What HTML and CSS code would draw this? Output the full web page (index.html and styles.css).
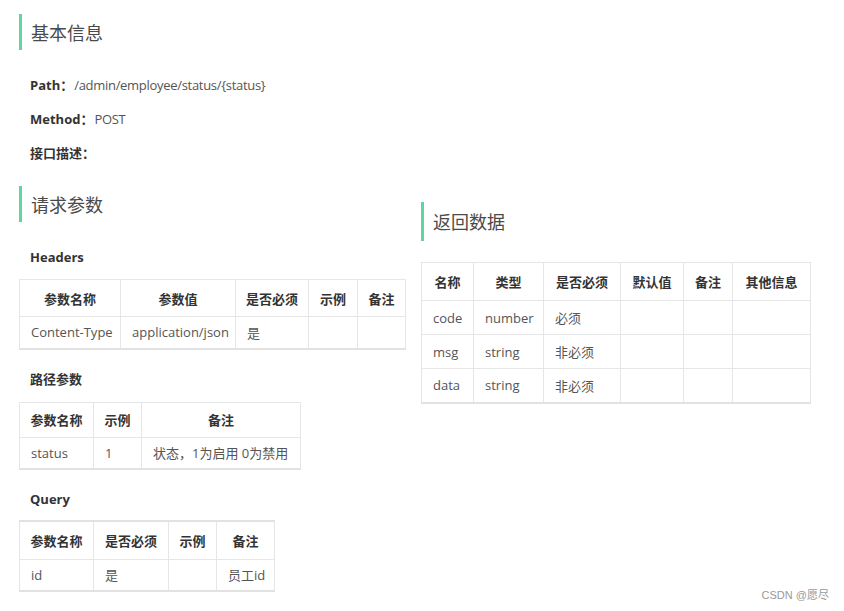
FILE: index.html
```html
<!DOCTYPE html>
<html lang="zh">
<head>
<meta charset="utf-8">
<title>接口文档</title>
<link rel="stylesheet" href="styles.css">
</head>
<body>
<div class="page">
  <section class="basic">
    <h2 class="title">基本信息</h2>
    <div class="meta"><b>Path：</b><span>/admin/employee/status/{status}</span></div>
    <div class="meta"><b>Method：</b><span>POST</span></div>
    <div class="meta"><b>接口描述：</b></div>
  </section>
  <div class="cols">
    <section class="left">
      <h2 class="title">请求参数</h2>
      <h3 class="sub">Headers</h3>
      <table class="t t1">
        <thead><tr><th>参数名称</th><th>参数值</th><th>是否必须</th><th>示例</th><th>备注</th></tr></thead>
        <tbody><tr><td>Content-Type</td><td>application/json</td><td>是</td><td></td><td></td></tr></tbody>
      </table>
      <h3 class="sub">路径参数</h3>
      <table class="t t2">
        <thead><tr><th>参数名称</th><th>示例</th><th>备注</th></tr></thead>
        <tbody><tr><td>status</td><td>1</td><td>状态，1为启用 0为禁用</td></tr></tbody>
      </table>
      <h3 class="sub">Query</h3>
      <table class="t t3">
        <thead><tr><th>参数名称</th><th>是否必须</th><th>示例</th><th>备注</th></tr></thead>
        <tbody><tr><td>id</td><td>是</td><td></td><td>员工id</td></tr></tbody>
      </table>
    </section>
    <section class="right">
      <h2 class="title">返回数据</h2>
      <table class="t t4">
        <thead><tr><th>名称</th><th>类型</th><th>是否必须</th><th>默认值</th><th>备注</th><th>其他信息</th></tr></thead>
        <tbody>
          <tr><td>code</td><td>number</td><td>必须</td><td></td><td></td><td></td></tr>
          <tr><td>msg</td><td>string</td><td>非必须</td><td></td><td></td><td></td></tr>
          <tr><td>data</td><td>string</td><td>非必须</td><td></td><td></td><td></td></tr>
        </tbody>
      </table>
    </section>
  </div>
  <div class="footer">CSDN @愿尽</div>
</div>
</body>
</html>
```

FILE: styles.css
```css
html, body {
  margin: 0;
  padding: 0;
  background: #fff;
}
body {
  font-family: "Open Sans", "Noto Sans CJK SC", sans-serif;
  font-size: 13px;
  color: #555;
}
.page {
  position: relative;
  width: 844px;
  height: 611px;
  padding: 14px 0 0 19px;
  box-sizing: border-box;
}
.title {
  margin: 0;
  height: 36px;
  box-sizing: border-box;
  padding-top: 2px;
  line-height: 34px;
  border-left: 3px solid #5fd5a0;
  padding-left: 9px;
  font-size: 18px;
  font-weight: normal;
  color: #4a4a4a;
}
.basic .title {
  margin-bottom: 18px;
}
.meta {
  height: 34px;
  line-height: 34px;
  padding-left: 11px;
  color: #555;
}
.meta b {
  color: #333;
  font-weight: bold;
  margin-right: 1px;
}
.meta span {
  letter-spacing: -0.3px;
}
.cols {
  display: flex;
  gap: 16px;
  margin-top: 16px;
}
.left {
  width: 386px;
}
.right {
  width: 389px;
  padding-top: 16px;
}
.right .title {
  height: 39px;
  line-height: 37px;
  margin-bottom: 21px;
}
.sub {
  margin: 0;
  height: 34px;
  line-height: 34px;
  padding-left: 11px;
  font-size: 13px;
  font-weight: bold;
  color: #333;
}
.left .title { margin-bottom: 18px; }
.t {
  border-collapse: collapse;
  table-layout: fixed;
  margin-top: 5px;
  margin-bottom: 12px;
}
.t th, .t td {
  box-sizing: border-box;
  border: 1px solid #e6e6e6;
  white-space: nowrap;
  overflow: hidden;
}
.t th {
  text-align: center;
  padding: 0;
  font-weight: bold;
  color: #333;
  height: 37px;
}
.t td {
  text-align: left;
  padding: 0 0 0 11px;
  color: #555;
  height: 32px;
}
.t tbody tr:last-child td {
  border-bottom: 2px solid #e2e2e2;
}
.t1 { width: 386px; }
.t1 th:nth-child(1) { width: 101px; }
.t1 th:nth-child(2) { width: 115px; }
.t1 th:nth-child(3) { width: 73px; }
.t1 th:nth-child(4) { width: 49px; }
.t1 th:nth-child(5) { width: 48px; }
.t2 { width: 281px; margin-top: 6px; }
.t2 th { height: 35px; }
.t2 th:nth-child(1) { width: 74px; }
.t2 th:nth-child(2) { width: 48px; }
.t2 th:nth-child(3) { width: 159px; }
.t3 { width: 255px; margin-top: 4px; }
.t3 th { height: 38px; border-top: 2px solid #e2e2e2; }
.t3 th:nth-child(1) { width: 74px; }
.t3 th:nth-child(2) { width: 75px; }
.t3 th:nth-child(3) { width: 48px; }
.t3 th:nth-child(4) { width: 58px; }
.t4 { width: 389px; margin-top: 0; }
.t4 th { height: 38px; }
.t4 td { height: 34px; }
.t4 th:nth-child(1) { width: 52px; }
.t4 th:nth-child(2) { width: 70px; }
.t4 th:nth-child(3) { width: 77px; }
.t4 th:nth-child(4) { width: 63px; }
.t4 th:nth-child(5) { width: 49px; }
.t4 th:nth-child(6) { width: 78px; }
.footer {
  position: absolute;
  right: 15px;
  bottom: 9px;
  font-family: "Liberation Sans", "Noto Sans CJK SC", sans-serif;
  font-size: 11px;
  color: #999;
}
```
